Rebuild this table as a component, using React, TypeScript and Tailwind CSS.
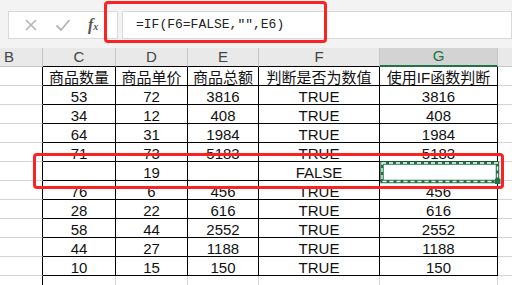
import React from "react";

const cols = ["w-[73px]", "w-[72px]", "w-[71px]", "w-[121px]", "w-[118px]"];
const letters = ["C", "D", "E", "F", "G"];

const rows: string[][] = [
  ["商品数量", "商品单价", "商品总额", "判断是否为数值", "使用IF函数判断"],
  ["53", "72", "3816", "TRUE", "3816"],
  ["34", "12", "408", "TRUE", "408"],
  ["64", "31", "1984", "TRUE", "1984"],
  ["71", "73", "5183", "TRUE", "5183"],
  ["", "19", "", "FALSE", ""],
  ["76", "6", "456", "TRUE", "456"],
  ["28", "22", "616", "TRUE", "616"],
  ["58", "44", "2552", "TRUE", "2552"],
  ["44", "27", "1188", "TRUE", "1188"],
  ["10", "15", "150", "TRUE", "150"],
];

export default function App() {
  return (
    <div
      className="relative w-[512px] h-[285px] overflow-hidden bg-white text-black"
      style={{ fontFamily: '"Liberation Sans", "Noto Sans CJK SC", sans-serif' }}
    >
      {/* Formula bar */}
      <div className="h-[48px] bg-[#f3f3f3] flex items-start pt-[11px] pl-[8px]">
        <div className="w-[110px] h-[28px] shrink-0 bg-white border border-[#d9d9d9] flex items-center">
          <svg width="14" height="14" viewBox="0 0 14 14" className="ml-[15px]">
            <path d="M2 2L12 12M12 2L2 12" stroke="#b4b4b4" strokeWidth="1.6" />
          </svg>
          <svg width="16" height="14" viewBox="0 0 16 14" className="ml-[17px]">
            <path d="M1.5 7.5L6 12L14.5 2" stroke="#b4b4b4" strokeWidth="1.8" fill="none" />
          </svg>
          <span
            className="ml-[17px] text-[16px] italic font-bold text-[#555] leading-none"
            style={{ fontFamily: '"Liberation Serif", serif' }}
          >
            f<span className="text-[10px]">x</span>
          </span>
        </div>
        <div className="ml-[4px] flex-1 h-[28px] bg-white border border-[#d9d9d9] flex items-center pl-[13px]">
          <span className="text-[13px] text-[#222]" style={{ fontFamily: '"Liberation Mono", monospace' }}>
            =IF(F6=FALSE,"",E6)
          </span>
        </div>
      </div>

      {/* Column headers */}
      <div className="flex h-[19px] bg-[#e9e9e9] text-[15px] text-[#444]">
        <div className="w-[43px] shrink-0 border-r border-b border-[#c6c6c6] flex items-center pl-[4px]">B</div>
        {letters.map((l, i) =>
          l === "G" ? (
            <div
              key={l}
              className={`${cols[i]} shrink-0 bg-[#d3d3d3] text-[#217346] border-r border-r-[#c6c6c6] border-b-2 border-b-[#217346] flex items-center justify-center`}
            >
              {l}
            </div>
          ) : (
            <div
              key={l}
              className={`${cols[i]} shrink-0 border-r border-r-[#c6c6c6] border-b border-b-black flex items-center justify-center`}
            >
              {l}
            </div>
          )
        )}
        <div className="flex-1 border-b border-[#c6c6c6]" />
      </div>

      {/* Table rows */}
      {rows.map((r, ri) => (
        <div key={ri} className="flex h-[19px] text-[15px] text-[#111]">
          <div className="w-[43px] shrink-0 border-r border-r-black border-b border-b-[#d4d4d4]" />
          {r.map((v, ci) => (
            <div
              key={ci}
              className={`${cols[ci]} shrink-0 border-r border-b border-black flex items-center justify-center pt-[3px] leading-none`}
            >
              {v}
            </div>
          ))}
          <div className="flex-1 border-b border-[#d4d4d4]" />
        </div>
      ))}

      {/* Next empty row */}
      <div className="flex h-[19px]">
        <div className="w-[43px] shrink-0 border-r border-r-black" />
        {cols.map((c, i) => (
          <div key={i} className={`${c} shrink-0 border-r border-[#d4d4d4]`} />
        ))}
        <div className="flex-1" />
      </div>

      {/* Copy marquee on G6 */}
      <svg className="absolute left-[380px] top-[161px]" width="121" height="23" viewBox="0 0 121 23">
        <rect x="2" y="2" width="115.5" height="18.5" fill="none" stroke="#217346" strokeWidth="3.5" />
        <rect x="2" y="2" width="115.5" height="18.5" fill="none" stroke="#ffffff" strokeWidth="1.3" strokeDasharray="4 3" />
        <rect x="115" y="17.5" width="5.5" height="5.5" fill="#217346" />
      </svg>

      {/* Red highlight boxes */}
      <div className="absolute left-[104px] top-[1px] w-[223px] h-[42px] border-[3px] border-[#fd2222] rounded-[4px]" />
      <div className="absolute left-[33px] top-[153px] w-[471px] h-[36px] border-[3px] border-[#fd2222] rounded-[4px]" />
    </div>
  );
}
